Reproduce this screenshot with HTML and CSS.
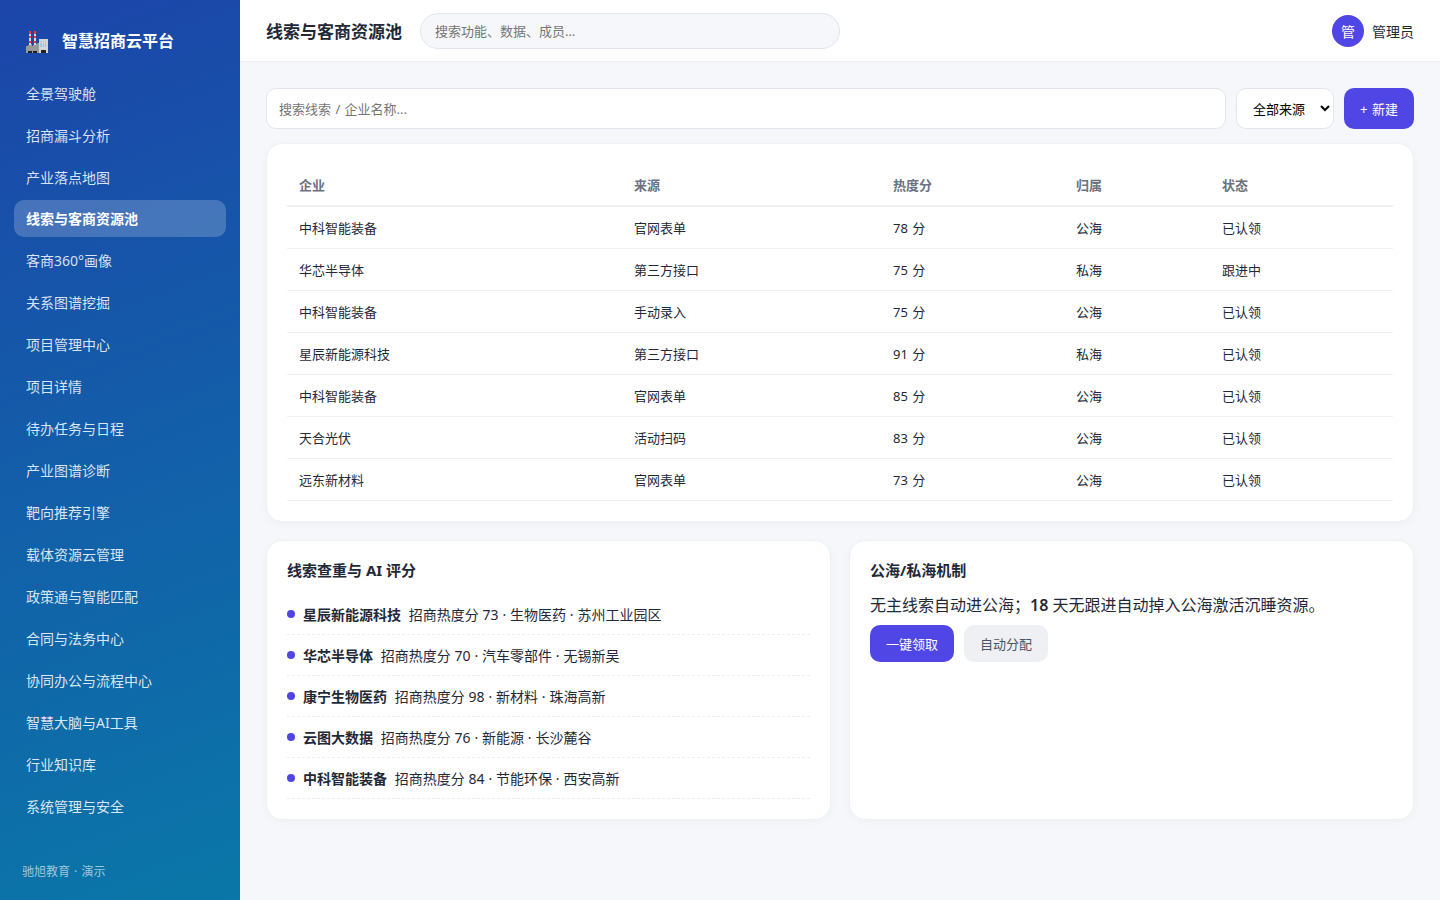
FILE: index.html
```html
<!DOCTYPE html>
<html lang="zh-CN">
<head>
    <meta charset="UTF-8">
    <meta name="viewport" content="width=device-width, initial-scale=1.0">
    <title>线索与客商资源池 - 智慧招商云平台</title>
    <link rel="stylesheet" href="styles.css">
</head>
<body>
    <aside class="sidebar">
        <div class="brand">
            <svg class="logo" width="22" height="22" viewBox="0 0 22 22" shape-rendering="crispEdges">
                <path fill="#d8d8d8" d="M3 0h2v15H3zM8 0h2v15H8z"/>
                <path fill="#f33a30" d="M3 0h2v3H3zM3 5h2v2H3zM3 10h2v2H3zM8 0h2v3H8zM8 5h2v2H8zM8 10h2v2H8z"/>
                <path fill="#999" d="M0 15h2v-1h3v-1h1v2h1v-1h3v-1h1v-1h2v10H0z"/>
                <path fill="#d6d6d6" d="M13 8h9v14h-9z"/>
                <path fill="#90caf9" d="M14 10h2v1h-2zM17 10h1v1h-1zM19 10h1v1h-1zM14 12h2v4h-2zM17 12h1v4h-1zM19 12h1v4h-1z"/>
                <path fill="#202020" d="M2 20h4v2H2zM7 20h4v2H7zM15 19h5v3h-5z"/>
            </svg>
            <span>智慧招商云平台</span>
        </div>
        <nav class="menu">
            <a>全景驾驶舱</a>
            <a>招商漏斗分析</a>
            <a>产业落点地图</a>
            <a class="active">线索与客商资源池</a>
            <a>客商360°画像</a>
            <a>关系图谱挖掘</a>
            <a>项目管理中心</a>
            <a>项目详情</a>
            <a>待办任务与日程</a>
            <a>产业图谱诊断</a>
            <a>靶向推荐引擎</a>
            <a>载体资源云管理</a>
            <a>政策通与智能匹配</a>
            <a>合同与法务中心</a>
            <a>协同办公与流程中心</a>
            <a>智慧大脑与AI工具</a>
            <a>行业知识库</a>
            <a>系统管理与安全</a>
        </nav>
        <div class="side-foot">驰旭教育 · 演示</div>
    </aside>

    <main class="main">
        <header class="topbar">
            <h1>线索与客商资源池</h1>
            <input class="global-search" type="text" placeholder="搜索功能、数据、成员…">
            <div class="user"><span class="avatar">管</span><span>管理员</span></div>
        </header>

        <section class="content">
            <div class="toolbar">
                <input type="text" placeholder="搜索线索 / 企业名称...">
                <select><option>全部来源</option></select>
                <button class="btn">+ 新建</button>
            </div>

            <div class="card">
                <table>
                    <thead>
                        <tr><th class="c-name">企业</th><th class="c-source">来源</th><th class="c-heat">热度分</th><th class="c-owner">归属</th><th>状态</th></tr>
                    </thead>
                    <tbody>
                        <tr><td>中科智能装备</td><td>官网表单</td><td>78 分</td><td>公海</td><td>已认领</td></tr>
                        <tr><td>华芯半导体</td><td>第三方接口</td><td>75 分</td><td>私海</td><td>跟进中</td></tr>
                        <tr><td>中科智能装备</td><td>手动录入</td><td>75 分</td><td>公海</td><td>已认领</td></tr>
                        <tr><td>星辰新能源科技</td><td>第三方接口</td><td>91 分</td><td>私海</td><td>已认领</td></tr>
                        <tr><td>中科智能装备</td><td>官网表单</td><td>85 分</td><td>公海</td><td>已认领</td></tr>
                        <tr><td>天合光伏</td><td>活动扫码</td><td>83 分</td><td>公海</td><td>已认领</td></tr>
                        <tr><td>远东新材料</td><td>官网表单</td><td>73 分</td><td>公海</td><td>已认领</td></tr>
                    </tbody>
                </table>
            </div>

            <div class="grid">
                <div class="card">
                    <h3>线索查重与 AI 评分</h3>
                    <ul class="list">
                        <li><span class="dot"></span><div><b>星辰新能源科技</b>&nbsp; 招商热度分 73 · 生物医药 · 苏州工业园区</div></li>
                        <li><span class="dot"></span><div><b>华芯半导体</b>&nbsp; 招商热度分 70 · 汽车零部件 · 无锡新吴</div></li>
                        <li><span class="dot"></span><div><b>康宁生物医药</b>&nbsp; 招商热度分 98 · 新材料 · 珠海高新</div></li>
                        <li><span class="dot"></span><div><b>云图大数据</b>&nbsp; 招商热度分 76 · 新能源 · 长沙麓谷</div></li>
                        <li><span class="dot"></span><div><b>中科智能装备</b>&nbsp; 招商热度分 84 · 节能环保 · 西安高新</div></li>
                    </ul>
                </div>
                <div class="card">
                    <h3>公海/私海机制</h3>
                    <p class="desc">无主线索自动进公海；<b>18</b> 天无跟进自动掉入公海激活沉睡资源。</p>
                    <div class="actions">
                        <button class="btn">一键领取</button>
                        <button class="btn ghost">自动分配</button>
                    </div>
                </div>
            </div>
        </section>
    </main>
</body>
</html>
```
FILE: styles.css
```css
* {
    box-sizing: border-box;
    margin: 0;
    padding: 0;
}
body {
    display: flex;
    height: 100vh;
    overflow: hidden;
    font-family: "Noto Sans", "Noto Sans CJK SC", sans-serif;
    background: #f5f7fb;
    color: #1f2937;
}
input, select, button {
    font-family: inherit;
    font-size: 13px;
}
.sidebar {
    width: 240px;
    flex: none;
    display: flex;
    flex-direction: column;
    padding: 22px 14px 18px;
    background: linear-gradient(160deg, #1c45aa, #0a77a8);
    color: #fff;
}
.brand {
    display: flex;
    align-items: center;
    gap: 14px;
    height: 52px;
    padding: 0 12px 16px;
    font-size: 16px;
    font-weight: 700;
}
.logo {
    margin-top: 4px;
}
.menu {
    display: flex;
    flex-direction: column;
    gap: 4px;
}
.menu a {
    height: 38px;
    padding: 0 12px;
    border-radius: 10px;
    font-size: 14px;
    line-height: 40px;
    color: rgba(255, 255, 255, 0.85);
}
.menu a.active {
    height: 37px;
    line-height: 37px;
    background: rgba(255, 255, 255, 0.2);
    color: #fff;
    font-weight: 700;
}
.side-foot {
    margin-top: auto;
    padding-left: 8px;
    font-size: 12px;
    line-height: 20px;
    word-spacing: 1px;
    color: rgba(255, 255, 255, 0.6);
}
.main {
    flex: 1;
    min-width: 0;
}
.topbar {
    display: flex;
    align-items: center;
    height: 62px;
    padding: 0 26px;
    background: #fff;
    border-bottom: 1px solid #eceef3;
}
.topbar h1 {
    font-size: 17px;
    font-weight: 700;
}
.global-search {
    width: 420px;
    height: 36px;
    margin-left: 18px;
    padding: 0 14px;
    border: 1px solid #e2e5ee;
    border-radius: 18px;
    background: #f5f7fb;
}
.user {
    display: flex;
    align-items: center;
    gap: 8px;
    margin-left: auto;
    font-size: 14px;
}
.avatar {
    display: grid;
    place-items: center;
    width: 32px;
    height: 32px;
    border-radius: 50%;
    background: #4f46e5;
    color: #fff;
    font-size: 14px;
}
.content {
    padding: 26px;
}
.toolbar {
    display: flex;
    gap: 10px;
    height: 41px;
    margin-bottom: 14px;
}
.toolbar input {
    flex: 1;
    padding: 0 12px;
    border: 1px solid #e2e5ee;
    border-radius: 10px;
    background: #fff;
    word-spacing: 1px;
}
.toolbar select {
    width: 98px;
    padding: 0 0 0 12px;
    border: 1px solid #e2e5ee;
    border-radius: 10px;
    background: #fff;
    color: #000;
}
.toolbar .btn {
    width: 70px;
    word-spacing: 1px;
}
.btn {
    padding: 0 16px 1px;
    border: none;
    border-radius: 10px;
    background: #4f46e5;
    color: #fff;
    white-space: nowrap;
}
.btn.ghost {
    background: #eef0f4;
    color: #475569;
}
.card {
    padding: 20px;
    background: #fff;
    border: 1px solid #eff1f5;
    border-radius: 16px;
    box-shadow: 0 2px 8px rgba(15, 23, 42, 0.03);
}
.card h3 {
    font-size: 15px;
    line-height: 18px;
}
table {
    width: 100%;
    table-layout: fixed;
    border-collapse: separate;
    border-spacing: 0;
    font-size: 13px;
    word-spacing: 1px;
}
th, td {
    height: 42px;
    padding: 0 12px 1px;
    text-align: left;
    border-bottom: 1px solid #eef0f4;
}
th {
    height: 43px;
    border-bottom-width: 2px;
    color: #6b7280;
    font-weight: 600;
}
.c-name { width: 335px; }
.c-source { width: 259px; }
.c-heat { width: 183px; }
.c-owner { width: 146px; }
.grid {
    display: grid;
    grid-template-columns: 1fr 1fr;
    gap: 18px;
    margin-top: 18px;
}
.grid .card {
    height: 280px;
}
.list {
    margin-top: 15px;
    list-style: none;
    font-size: 14px;
    word-spacing: 0.2px;
}
.list li {
    display: flex;
    align-items: center;
    gap: 8px;
    height: 41px;
    border-bottom: 1px dashed #eceef3;
}
.dot {
    width: 8px;
    height: 8px;
    border-radius: 50%;
    background: #4f46e5;
}
.desc {
    margin-top: 12px;
    font-size: 16px;
    line-height: 28px;
}
.desc b {
    font-weight: 600;
}
.actions {
    display: flex;
    gap: 10px;
    margin-top: 6px;
}
.actions .btn {
    height: 37px;
}
```
